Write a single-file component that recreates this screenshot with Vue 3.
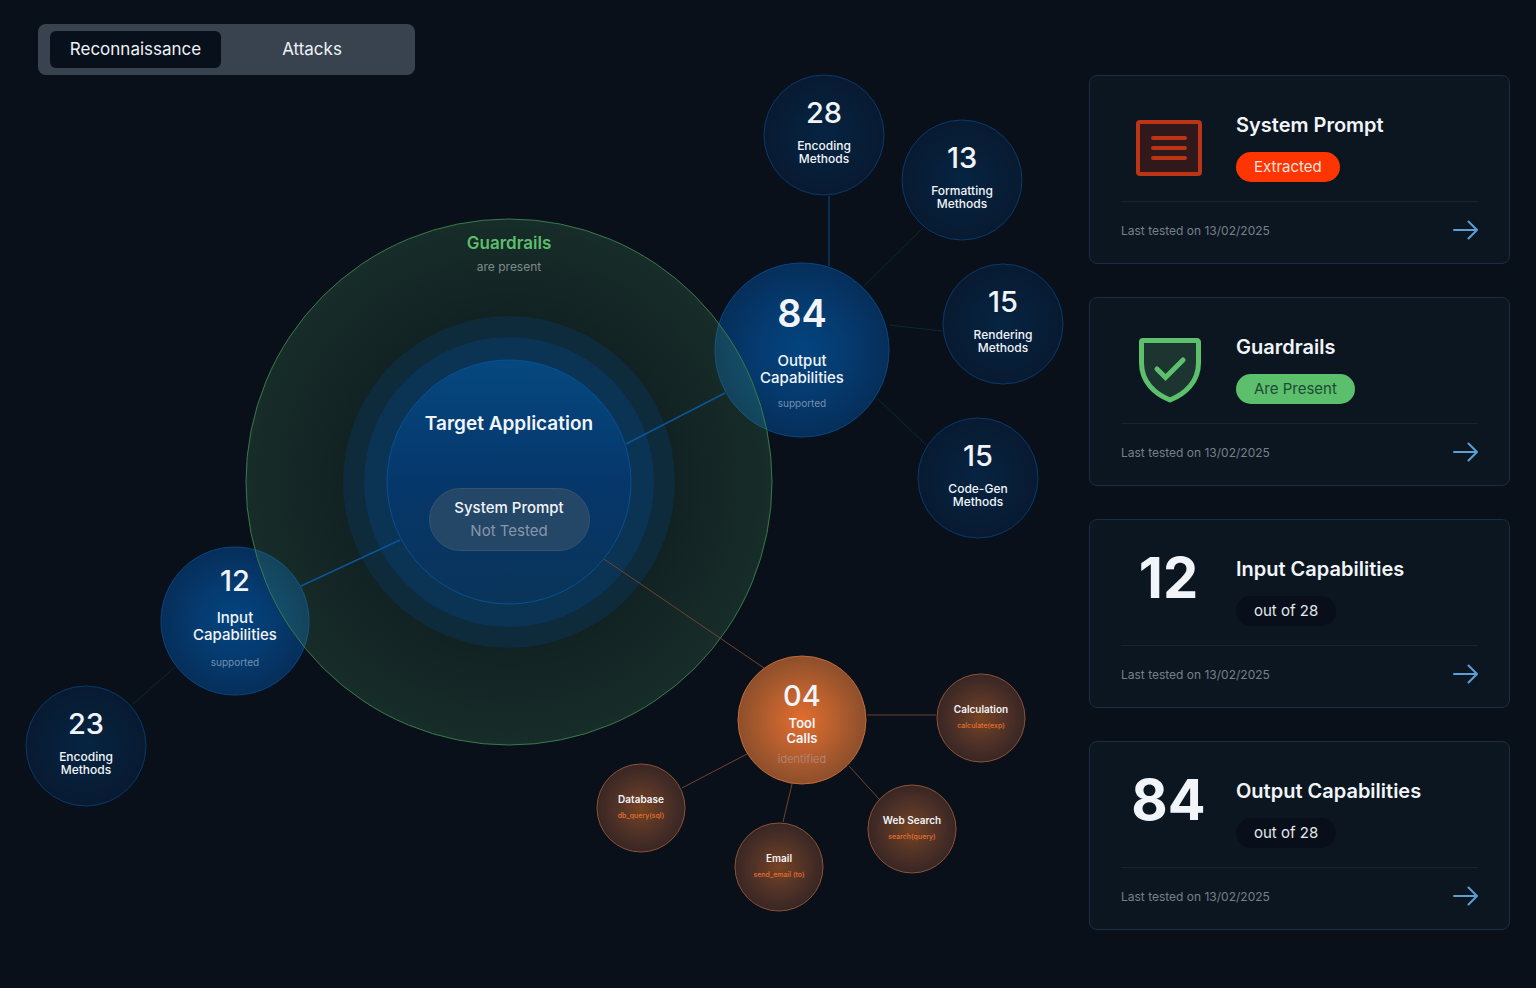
<script setup>
import { ref } from 'vue'

const tabs = ['Reconnaissance', 'Attacks']
const activeTab = ref('Reconnaissance')

// x / y are the centres on the map canvas
const hubs = [
  { kind: 'output', x: 802, y: 275, r: 87, count: '84', label: 'Output\nCapabilities', note: 'supported' },
  { kind: 'input', x: 235, y: 546, r: 74, count: '12', label: 'Input\nCapabilities', note: 'supported' }
]

const leaves = [
  { kind: 'method', x: 824, y: 60, r: 60, count: '28', label: 'Encoding\nMethods' },
  { kind: 'method', x: 962, y: 105, r: 60, count: '13', label: 'Formatting\nMethods' },
  { kind: 'method', x: 1003, y: 249, r: 60, count: '15', label: 'Rendering\nMethods' },
  { kind: 'method', x: 978, y: 403, r: 60, count: '15', label: 'Code-Gen\nMethods' },
  { kind: 'method', x: 86, y: 671, r: 60, count: '23', label: 'Encoding\nMethods' },
  { kind: 'tools', x: 802, y: 645, r: 64, count: '04', label: 'Tool\nCalls', note: 'identified' },
  { kind: 'call', x: 981, y: 643, r: 44, label: 'Calculation', note: 'calculate(exp)' },
  { kind: 'call', x: 912, y: 754, r: 44, label: 'Web Search', note: 'search(query)' },
  { kind: 'call', x: 779, y: 792, r: 44, label: 'Email', note: 'send_email (to)' },
  { kind: 'call', x: 641, y: 733, r: 44, label: 'Database', note: 'db_query(sql)' }
]

const nodes = [...hubs, ...leaves]

const links = [
  { type: 'strong', x1: 626, y1: 369, x2: 725, y2: 318 },
  { type: 'strong', x1: 400, y1: 465, x2: 301, y2: 511 },
  { type: 'medium', x1: 829, y1: 121, x2: 829, y2: 191 },
  { type: 'faint', x1: 923, y1: 153, x2: 864, y2: 211 },
  { type: 'faint', x1: 889, y1: 250, x2: 942, y2: 256 },
  { type: 'faint', x1: 878, y1: 324, x2: 926, y2: 370 },
  { type: 'faint', x1: 175, y1: 592, x2: 133, y2: 629 },
  { type: 'tool', x1: 604, y1: 484, x2: 764, y2: 593 },
  { type: 'tool', x1: 867, y1: 640, x2: 936, y2: 640 },
  { type: 'tool', x1: 849, y1: 691, x2: 880, y2: 725 },
  { type: 'tool', x1: 792, y1: 709, x2: 783, y2: 747 },
  { type: 'tool', x1: 747, y1: 679, x2: 682, y2: 713 }
]

const cards = [
  { title: 'System Prompt', icon: 'prompt', status: 'Extracted', tone: 'danger' },
  { title: 'Guardrails', icon: 'shield', status: 'Are Present', tone: 'success' },
  { title: 'Input Capabilities', count: '12', status: 'out of 28', tone: 'plain' },
  { title: 'Output Capabilities', count: '84', status: 'out of 28', tone: 'plain' }
]

function box(node) {
  return {
    left: node.x - node.r + 'px',
    top: node.y - node.r + 'px',
    width: node.r * 2 + 'px',
    height: node.r * 2 + 'px'
  }
}
</script>

<template>
  <div class="page">
    <header class="topbar">
      <nav class="tabs">
        <button
          v-for="tab in tabs"
          :key="tab"
          type="button"
          class="tab"
          :class="{ active: tab === activeTab }"
          @click="activeTab = tab"
        >{{ tab }}</button>
      </nav>
    </header>

    <main class="board">
      <section class="map">
        <svg class="wires" width="1089" height="856" viewBox="0 0 1089 856">
          <defs>
            <radialGradient id="hub">
              <stop offset="0" stop-color="#03447f" />
              <stop offset="0.5" stop-color="#053b70" />
              <stop offset="1" stop-color="#062e5a" />
            </radialGradient>
            <radialGradient id="method">
              <stop offset="0" stop-color="#062442" />
              <stop offset="1" stop-color="#081a31" />
            </radialGradient>
            <radialGradient id="guard">
              <stop offset="0.6" stop-color="#4fa062" stop-opacity="0.12" />
              <stop offset="1" stop-color="#4fa062" stop-opacity="0.2" />
            </radialGradient>
            <radialGradient id="tools">
              <stop offset="0" stop-color="#e26d2e" />
              <stop offset="0.5" stop-color="#b95f2e" />
              <stop offset="1" stop-color="#8c4f2b" />
            </radialGradient>
            <radialGradient id="call">
              <stop offset="0" stop-color="#774322" />
              <stop offset="0.5" stop-color="#553427" />
              <stop offset="1" stop-color="#382624" />
            </radialGradient>
            <linearGradient id="target" x1="0" y1="0" x2="0" y2="1">
              <stop offset="0" stop-color="#05487f" />
              <stop offset="0.5" stop-color="#06376b" />
              <stop offset="1" stop-color="#0a3459" />
            </linearGradient>
          </defs>

          <circle v-for="hub in hubs" :key="hub.kind" class="hub" :cx="hub.x" :cy="hub.y" :r="hub.r" fill="url(#hub)" />

          <circle class="guard" cx="509" cy="407" r="263" fill="url(#guard)" />
          <circle class="halo-outer" cx="509" cy="407" r="166" />
          <circle class="halo-inner" cx="509" cy="407" r="145" />
          <circle class="target" cx="509" cy="407" r="122" fill="url(#target)" />

          <line v-for="(l, i) in links" :key="i" :class="'link-' + l.type" :x1="l.x1" :y1="l.y1" :x2="l.x2" :y2="l.y2" />

          <circle
            v-for="leaf in leaves"
            :key="leaf.x"
            :class="leaf.kind"
            :cx="leaf.x"
            :cy="leaf.y"
            :r="leaf.r"
            :fill="`url(#${leaf.kind})`"
          />
        </svg>

        <div class="guard-text" :style="box({ x: 509, y: 407, r: 263 })">
          <h2>Guardrails</h2>
          <p>are present</p>
        </div>

        <div class="target-text" :style="box({ x: 509, y: 407, r: 122 })">
          <h2>Target Application</h2>
          <div class="prompt-state">
            <strong>System Prompt</strong>
            <span>Not Tested</span>
          </div>
        </div>

        <div v-for="node in nodes" :key="node.x" class="node" :class="'node-' + node.kind" :style="box(node)">
          <span v-if="node.count" class="count">{{ node.count }}</span>
          <span class="label">{{ node.label }}</span>
          <span v-if="node.note" class="note">{{ node.note }}</span>
        </div>
      </section>

      <aside class="cards">
        <article v-for="card in cards" :key="card.title" class="card">
          <div class="card-top">
            <div class="figure">
              <svg v-if="card.icon === 'prompt'" width="68" height="76" viewBox="0 0 68 76">
                <rect x="3" y="12" width="62" height="52" rx="2" fill="#31191b" stroke="#bb3416" stroke-width="4" />
                <path d="M18 28h32M18 38h32M18 48h32" fill="none" stroke="#bb3416" stroke-width="4" stroke-linecap="round" />
              </svg>
              <svg v-else-if="card.icon === 'shield'" width="68" height="76" viewBox="0 0 68 76">
                <path
                  d="M8 8.500H62a1.500 1.500 0 0 1 1.500 1.500V31C63.500 50 50 62 35 68C20 62 6.500 50 6.500 31V10A1.500 1.500 0 0 1 8 8.500Z"
                  fill="#1d3531"
                  stroke="#5cc06c"
                  stroke-width="5"
                  stroke-linejoin="round"
                />
                <path d="M22 37l8.500 8.500L48 28" fill="none" stroke="#5cc06c" stroke-width="5" stroke-linecap="round" />
              </svg>
              <span v-else class="total">{{ card.count }}</span>
            </div>
            <div class="info">
              <h3>{{ card.title }}</h3>
              <span class="badge" :class="card.tone">{{ card.status }}</span>
            </div>
          </div>
          <div class="card-foot">
            <span>Last tested on 13/02/2025</span>
            <a href="#" :aria-label="card.title">
              <svg width="26" height="20" viewBox="0 0 26 20">
                <path d="M2 10h23M16.500 1.500L25 10l-8.500 8.500" fill="none" stroke="#5a9fd6" stroke-width="2" stroke-linecap="round" stroke-linejoin="round" />
              </svg>
            </a>
          </div>
        </article>
      </aside>
    </main>
  </div>
</template>

<style>
body {
  margin: 0;
  background: #09101a;
}
</style>

<style scoped>
.page {
  min-height: 100vh;
  box-sizing: border-box;
  padding-bottom: 32px;
  background: #09101a;
  color: #f1f5fa;
  font-family: Inter, "Liberation Sans", sans-serif;
}

h2, h3, p {
  margin: 0;
}

.topbar {
  padding: 24px 38px 0;
}

.tabs {
  display: inline-flex;
  height: 51px;
  box-sizing: border-box;
  padding: 7px 12px;
  border-radius: 8px;
  background: #38434f;
  vertical-align: top;
}

.tab {
  width: 182px;
  padding: 0;
  border: 0;
  border-radius: 6px;
  background: none;
  color: #eef2f7;
  font: 400 17px/37px Inter, "Liberation Sans", sans-serif;
  cursor: pointer;
}

.tab.active {
  width: 171px;
  background: #08101b;
}

.board {
  display: grid;
  grid-template-columns: minmax(1062px, 1fr) 421px;
  padding-right: 26px;
}

/* map */
.map {
  position: relative;
}

.wires {
  display: block;
  overflow: visible;
}

.hub {
  stroke: #084784;
}

.method {
  stroke: #073a6b;
}

.guard {
  stroke: #397a4a;
}

.halo-outer {
  fill: #0e2b3c;
}

.halo-inner {
  fill: #0b3354;
}

.target {
  stroke: #075093;
}

.tools {
  stroke: #c56a38;
}

.call {
  stroke: #8f5234;
}

.link-strong {
  stroke: #0b5598;
  stroke-width: 1.5;
}

.link-medium {
  stroke: #082f52;
  stroke-width: 2;
}

.link-faint {
  stroke: #0c2735;
}

.link-tool {
  stroke: #70432e;
}

.guard-text,
.target-text,
.node {
  position: absolute;
  display: flex;
  flex-direction: column;
  align-items: center;
  box-sizing: border-box;
  text-align: center;
}

.guard-text {
  padding-top: 12px;
}

.guard-text h2 {
  color: #5cbd6c;
  font-size: 17px;
  font-weight: 600;
  line-height: 24px;
}

.guard-text p {
  margin-top: 4px;
  color: #7c8b8a;
  font-size: 12px;
  line-height: 16px;
}

.target-text {
  justify-content: center;
  gap: 50px;
  padding-bottom: 4px;
}

.target-text h2 {
  font-size: 19px;
  font-weight: 600;
  line-height: 28px;
  white-space: nowrap;
}

.prompt-state {
  display: flex;
  flex-direction: column;
  width: 161px;
  height: 63px;
  box-sizing: border-box;
  padding-top: 7px;
  border: 1px solid #35536f;
  border-radius: 32px;
  background: #244667;
  font-size: 15px;
  line-height: 23px;
}

.prompt-state strong {
  font-weight: 500;
}

.prompt-state span {
  color: #8796ac;
}

.node {
  justify-content: center;
}

.label {
  font-weight: 500;
  white-space: pre-line;
}

.count {
  font-size: 29px;
  font-weight: 500;
  line-height: 36px;
}

.note {
  color: #7490b0;
  font-size: 10px;
  line-height: 14px;
}

.node-method {
  padding-bottom: 10px;
}

.node-method .label {
  margin-top: 8px;
  font-size: 12px;
  line-height: 13px;
}

.node-output .count {
  font-size: 38px;
  font-weight: 600;
  line-height: 44px;
}

.node-output .label {
  margin: 17px 0 10px;
  font-size: 15px;
  line-height: 17px;
}

.node-input {
  padding-bottom: 10px;
}

.node-input .label {
  margin: 10px 0 12px;
  font-size: 15px;
  line-height: 17px;
}

.node-tools {
  padding-top: 4px;
}

.node-tools .label {
  margin: 2px 0 6px;
  font-size: 13px;
  font-weight: 600;
  line-height: 15px;
}

.node-tools .note {
  color: #b18370;
  font-size: 11px;
}

.node-call {
  padding-bottom: 2px;
}

.node-call .label {
  font-size: 10px;
  font-weight: 600;
  line-height: 14px;
}

.node-call .note {
  margin-top: 4px;
  color: #e5702f;
  font-size: 7px;
  font-weight: 500;
  line-height: 12px;
}

/* cards */
.cards {
  display: flex;
  flex-direction: column;
  gap: 33px;
}

.card {
  padding: 34px 31px 5px;
  border: 1px solid #1b2d42;
  border-radius: 8px;
  background: #0c1620;
}

.card-top {
  display: flex;
  gap: 20px;
  padding-bottom: 19px;
  border-bottom: 1px solid #17222e;
}

.figure {
  display: flex;
  justify-content: center;
  align-items: flex-start;
  width: 95px;
  height: 72px;
}

.total {
  font-size: 56px;
  font-weight: 700;
  line-height: 48px;
}

.info {
  flex: 1;
}

.info h3 {
  margin-bottom: 12px;
  font-size: 20px;
  font-weight: 600;
  line-height: 30px;
}

.badge {
  display: inline-block;
  padding: 0 18px;
  border-radius: 15px;
  font-size: 15px;
  line-height: 30px;
  vertical-align: top;
}

.danger {
  background: #fc3503;
  color: #fde3da;
}

.success {
  background: #5cbf6c;
  color: #1d4a35;
}

.plain {
  background: #080f1a;
  color: #e3e8ee;
}

.card-foot {
  display: flex;
  justify-content: space-between;
  align-items: center;
  height: 56px;
  color: #75808b;
  font-size: 12px;
}

.card-foot a {
  display: flex;
}

@media (max-width: 1480px) {
  .board {
    grid-template-columns: 1fr;
    padding: 0 26px;
  }
}
</style>
